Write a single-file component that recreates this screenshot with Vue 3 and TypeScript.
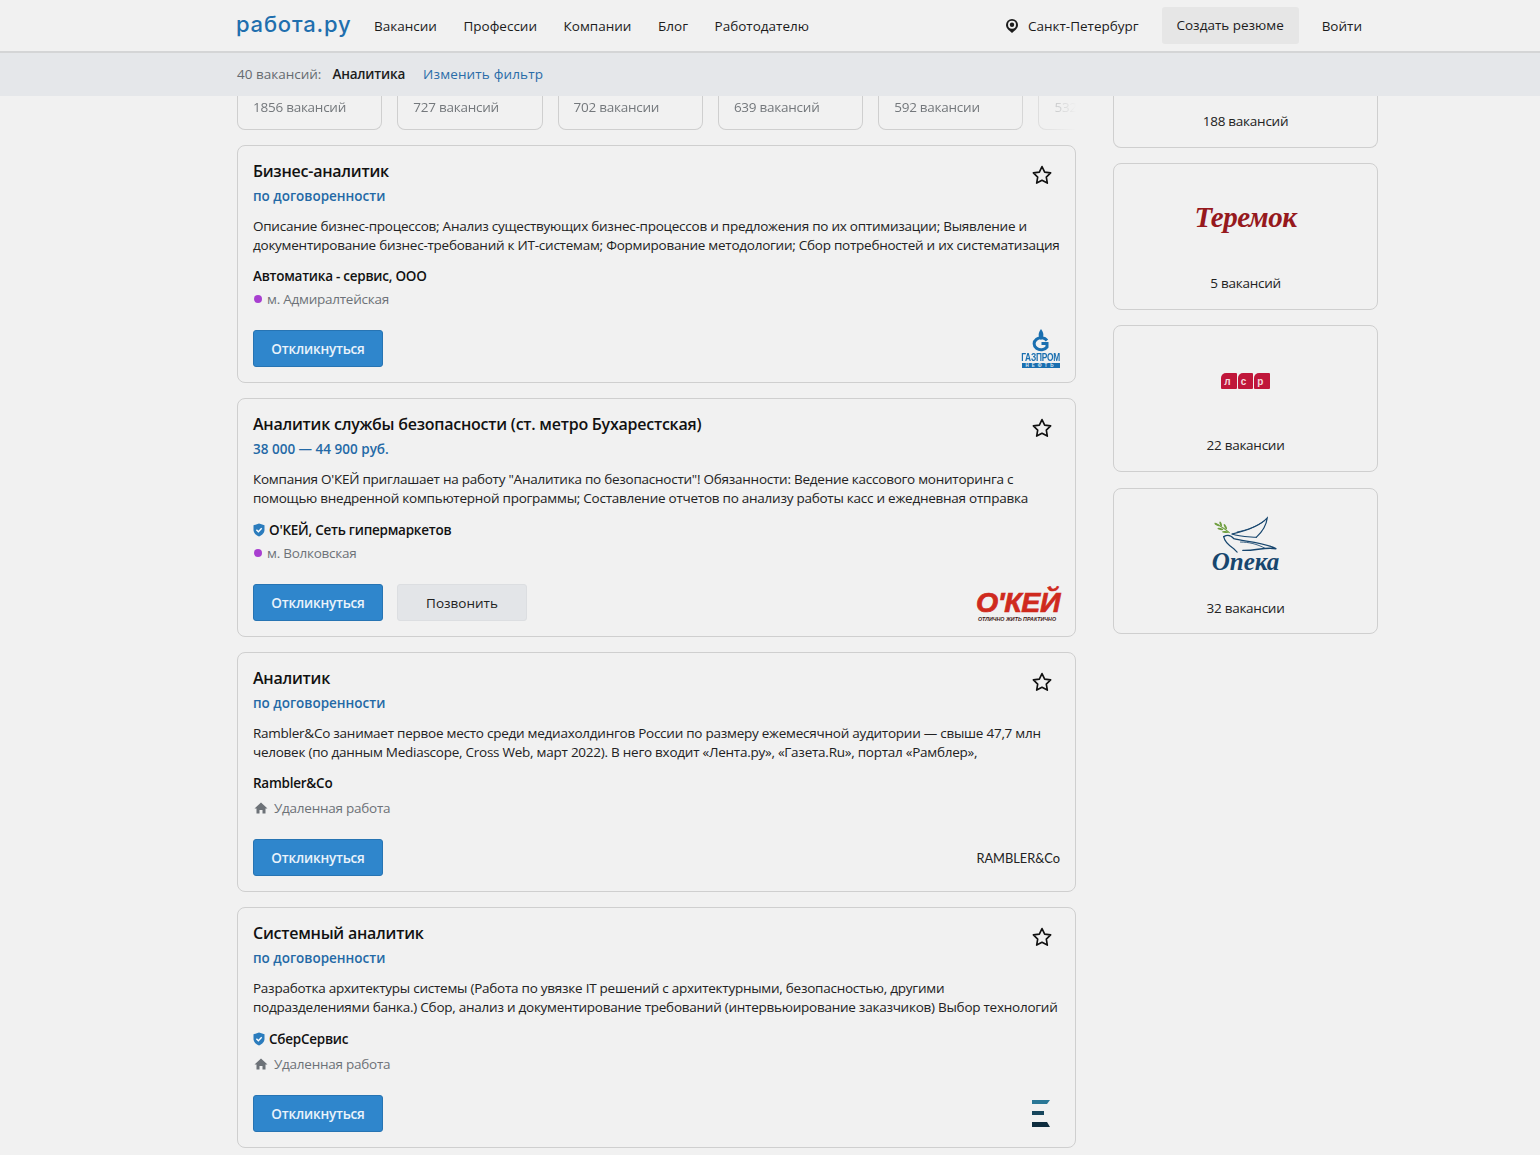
<script setup lang="ts">
interface Vacancy {
  title: string
  salary: string
  text: string[]
  company: string
  verified?: boolean
  metro?: string
  remote?: boolean
  call?: boolean
  logo: 'gazprom' | 'okey' | 'rambler' | 'sber'
}

const nav = ['Вакансии', 'Профессии', 'Компании', 'Блог', 'Работодателю']
const chips = ['1856 вакансий', '727 вакансий', '702 вакансии', '639 вакансий', '592 вакансии', '532 вакансии']

const vacancies: Vacancy[] = [
  {
    title: 'Бизнес-аналитик',
    salary: 'по договоренности',
    text: [
      'Описание бизнес-процессов; Анализ существующих бизнес-процессов и предложения по их оптимизации; Выявление и',
      'документирование бизнес-требований к ИТ-системам; Формирование методологии; Сбор потребностей и их систематизация',
    ],
    company: 'Автоматика - сервис, ООО',
    metro: 'м. Адмиралтейская',
    logo: 'gazprom',
  },
  {
    title: 'Аналитик службы безопасности (ст. метро Бухарестская)',
    salary: '38 000 — 44 900 руб.',
    text: [
      'Компания О\'КЕЙ приглашает на работу "Аналитика по безопасности"! Обязанности: Ведение кассового мониторинга с',
      'помощью внедренной компьютерной программы; Составление отчетов по анализу работы касс и ежедневная отправка',
    ],
    company: "О'КЕЙ, Сеть гипермаркетов",
    verified: true,
    metro: 'м. Волковская',
    call: true,
    logo: 'okey',
  },
  {
    title: 'Аналитик',
    salary: 'по договоренности',
    text: [
      'Rambler&Co занимает первое место среди медиахолдингов России по размеру ежемесячной аудитории — свыше 47,7 млн',
      'человек (по данным Mediascope, Cross Web, март 2022). В него входит «Лента.ру», «Газета.Ru», портал «Рамблер»,',
    ],
    company: 'Rambler&Co',
    remote: true,
    logo: 'rambler',
  },
  {
    title: 'Системный аналитик',
    salary: 'по договоренности',
    text: [
      'Разработка архитектуры системы (Работа по увязке IT решений с архитектурными, безопасностью, другими',
      'подразделениями банка.) Сбор, анализ и документирование требований (интервьюирование заказчиков) Выбор технологий',
    ],
    company: 'СберСервис',
    verified: true,
    remote: true,
    logo: 'sber',
  },
]
</script>

<template>
  <div class="page">
    <header class="topbar">
      <div class="topbar-inner">
        <a class="brand">работа.ру</a>
        <nav class="nav">
          <a v-for="item in nav" :key="item">{{ item }}</a>
        </nav>
        <div class="top-right">
          <span class="city">
            <svg width="14" height="16" viewBox="0 0 14 16">
              <path d="M7 1a6 6 0 0 1 6 6c0 3-3 5.500-6 8-3-2.500-6-5-6-8a6 6 0 0 1 6-6z" fill="#1c1c1c" />
              <circle cx="7" cy="6.800" r="4" fill="#f1f1f1" />
              <circle cx="7" cy="6.800" r="2.200" fill="#1c1c1c" />
            </svg>
            Санкт-Петербург
          </span>
          <a class="resume">Создать резюме</a>
          <a class="login">Войти</a>
        </div>
      </div>
    </header>

    <div class="filterbar">
      <div class="filterbar-inner">
        <span class="count">40 вакансий:</span>
        <span class="query">Аналитика</span>
        <a class="change">Изменить фильтр</a>
      </div>
    </div>

    <main class="layout">
      <section class="results">
        <div class="chips">
          <div v-for="chip in chips" :key="chip" class="chip">{{ chip }}</div>
        </div>

        <article
          v-for="v in vacancies"
          :key="v.title"
          class="card"
          :class="{ 'is-verified': v.verified, 'is-remote': v.remote }"
        >
          <div class="card-head">
            <div>
              <h3 class="title">{{ v.title }}</h3>
              <div class="salary">{{ v.salary }}</div>
            </div>
            <svg class="star" width="22" height="22" viewBox="0 0 24 24">
              <path
                d="M12 2.800l2.900 6 6.500.9-4.700 4.600 1.100 6.500-5.800-3.100-5.800 3.100 1.100-6.500-4.700-4.600 6.500-.9z"
                fill="none"
                stroke="#111"
                stroke-width="1.800"
                stroke-linejoin="round"
              />
            </svg>
          </div>

          <p class="desc">
            <span v-for="line in v.text" :key="line">{{ line }}</span>
          </p>

          <div class="company">
            <svg v-if="v.verified" width="12" height="14" viewBox="0 0 12 14">
              <path d="M6 .5l5.500 1.800v4.500c0 3.200-2.500 5.500-5.500 6.700C3 12.300.5 10 .5 6.800V2.300z" fill="#2b7cbd" />
              <path d="M3.400 6.800l2 2 3.300-3.500" fill="none" stroke="#fff" stroke-width="1.400" />
            </svg>
            {{ v.company }}
          </div>

          <div class="place">
            <i v-if="v.metro" class="metro-dot"></i>
            <svg v-if="v.remote" class="home" width="14" height="12" viewBox="0 0 14 12">
              <path d="M7 .5L.5 6.500h2V11.500h3V8h3v3.500h3V6.500h2z" fill="#6d7278" />
            </svg>
            {{ v.metro || 'Удаленная работа' }}
          </div>

          <div class="card-foot">
            <div class="actions">
              <button class="btn btn-primary">Откликнуться</button>
              <button v-if="v.call" class="btn btn-muted">Позвонить</button>
            </div>

            <div v-if="v.logo === 'gazprom'" class="logo-gazprom">
              <svg width="18" height="23" viewBox="0 0 18 23">
                <path d="M9 0c-2 3-3 5-2 8 .4 1.300 1 2 2 3 1-1 1.600-1.700 2-3 1-3 0-5-2-8z" fill="#1a6fb0" />
                <path
                  d="M15 11.500A7 6 0 1 0 15 18v-3.500H9.500"
                  fill="none"
                  stroke="#1a6fb0"
                  stroke-width="3"
                />
              </svg>
              <span class="gz-name">ГАЗПРОМ</span>
              <span class="gz-sub">НЕФТЬ</span>
            </div>

            <div v-else-if="v.logo === 'okey'" class="logo-okey">
              <span class="okey-name">О'КЕЙ</span>
              <span class="okey-sub">ОТЛИЧНО ЖИТЬ ПРАКТИЧНО</span>
            </div>

            <div v-else-if="v.logo === 'rambler'" class="logo-rambler">RAMBLER&amp;Co</div>

            <svg v-else class="logo-sber" width="20" height="28" viewBox="0 0 20 28">
              <path d="M1 0h18l-3 4H1z" fill="#2a7796" />
              <path d="M1 11h12v4H1z" fill="#17465c" />
              <path d="M1 22h15l3 5H1z" fill="#0e2c3e" />
            </svg>
          </div>
        </article>
      </section>

      <aside class="sidebar">
        <div class="side-card cut"><span class="side-count">188 вакансий</span></div>

        <div class="side-card">
          <div class="side-logo"><span class="logo-teremok">Теремок</span></div>
          <span class="side-count">5 вакансий</span>
        </div>

        <div class="side-card">
          <div class="side-logo">
            <div class="logo-lsr">
              <span>л</span><span>с</span><span>р</span>
            </div>
          </div>
          <span class="side-count">22 вакансии</span>
        </div>

        <div class="side-card">
          <div class="side-logo logo-opeka">
            <svg width="67" height="38" viewBox="130 72 200 112">
              <g fill="none" stroke="#6f9f3f" stroke-width="3">
                <path d="M138 95c15 8 32 18 45 30" />
              </g>
              <g fill="#6f9f3f">
                <ellipse cx="145" cy="100" rx="8" ry="3" transform="rotate(25 145 100)" />
                <ellipse cx="156" cy="98" rx="8" ry="3" transform="rotate(70 156 98)" />
                <ellipse cx="155" cy="113" rx="9" ry="3" transform="rotate(10 155 113)" />
                <ellipse cx="170" cy="106" rx="9" ry="3" transform="rotate(60 170 106)" />
                <ellipse cx="170" cy="122" rx="10" ry="3" transform="rotate(5 170 122)" />
              </g>
              <g fill="none" stroke="#17466e" stroke-linecap="round">
                <path stroke-width="3.500" d="M190 128c35-8 80-20 105-48-3 24-15 42-33 58" />
                <path stroke-width="3" d="M190 128c20 8 48 8 72 10" />
                <path stroke-width="2.500" d="M205 122c30-6 60-16 82-34" />
                <path stroke-width="4" d="M165 136c10-6 22-4 30 6 25 8 90 10 127 30-35-6-60 6-100 5" />
                <path stroke-width="3.500" d="M165 136c2 14 12 24 30 36l10 10" />
                <path stroke-width="2.500" d="M215 152c25 0 50 6 72 18" />
              </g>
            </svg>
            <span class="opeka-name">Опека</span>
          </div>
          <span class="side-count">32 вакансии</span>
        </div>
      </aside>
    </main>
  </div>
</template>

<style>
html,
body {
  margin: 0;
  background: #f1f1f1;
}
</style>

<style scoped>
.page {
  height: 1155px;
  overflow: hidden;
  background: #f1f1f1;
  font-family: 'Open Sans', 'Noto Sans', sans-serif;
  font-size: 13.500px;
  color: #1c1c1c;
}

.topbar {
  height: 51px;
  border-bottom: 2px solid #d4d5d6;
  box-sizing: content-box;
}

.topbar-inner {
  display: flex;
  align-items: center;
  height: 51px;
  padding-left: 236px;
  width: 1126px;
}

.brand {
  width: 138px;
  font-family: 'Inter', 'Open Sans', sans-serif;
  font-size: 22px;
  font-weight: 500;
  letter-spacing: 0.800px;
  color: #1f6fae;
  position: relative;
  top: -2px;
}

.nav {
  display: flex;
  gap: 26.600px;
  font-weight: 500;
}

.top-right {
  margin-left: auto;
  display: flex;
  align-items: center;
  font-weight: 500;
}

.city {
  display: flex;
  align-items: center;
  gap: 9px;
}

.resume {
  margin-left: 23px;
  width: 137px;
  height: 37px;
  line-height: 37px;
  text-align: center;
  background: #e6e6e6;
  border-radius: 3px;
}

.login {
  margin-left: 23px;
}

.filterbar {
  height: 43px;
  background: #e5e7ea;
}

.filterbar-inner {
  display: flex;
  align-items: center;
  height: 41px;
  padding-left: 237px;
}

.count {
  color: #666b70;
}

.query {
  margin-left: 11px;
  font-weight: 600;
  letter-spacing: -0.200px;
}

.change {
  margin-left: 18px;
  font-weight: 500;
  letter-spacing: 0.150px;
  color: #2a6ca8;
}

.layout {
  display: flex;
  gap: 37px;
  padding-left: 237px;
  align-items: flex-start;
}

.results {
  width: 839px;
  display: flex;
  flex-direction: column;
  gap: 15px;
}

.chips {
  display: flex;
  gap: 15px;
  overflow: hidden;
  mask-image: linear-gradient(to right, black 92%, transparent 100%);
}

.chip {
  flex: 0 0 145.300px;
  box-sizing: border-box;
  height: 34px;
  padding: 1px 15px 0;
  border: 1px solid #cfcfcf;
  border-top: 0;
  border-radius: 0 0 8px 8px;
  color: #74787c;
  letter-spacing: -0.250px;
  line-height: 20px;
  white-space: nowrap;
}

.card {
  box-sizing: border-box;
  padding: 14px 15px 15px;
  border: 1px solid #cfcfcf;
  border-radius: 8px;
}

.card-head {
  display: flex;
  justify-content: space-between;
}

.title {
  margin: 0;
  font-size: 16px;
  font-weight: 600;
  letter-spacing: -0.240px;
  line-height: 22px;
  color: #111;
}

.salary {
  margin-top: 4px;
  font-weight: 600;
  line-height: 20px;
  color: #2469a6;
}

.star {
  margin: 4px 7px 0 0;
}

.desc {
  margin: 11px 0 0;
  line-height: 18.500px;
  letter-spacing: -0.250px;
  color: #222;
}

.desc span {
  display: block;
  white-space: nowrap;
}

.company {
  display: flex;
  align-items: center;
  gap: 4px;
  margin-top: 11px;
  height: 22px;
  font-weight: 600;
  letter-spacing: -0.250px;
  color: #111;
}

.is-verified .company {
  height: 23px;
}

.place {
  display: flex;
  align-items: center;
  gap: 5px;
  margin-top: 1px;
  height: 22px;
  letter-spacing: -0.250px;
  color: #6d7278;
}

.is-remote .place {
  height: 24px;
  margin-top: 2px;
  gap: 6px;
}

.metro-dot {
  width: 8px;
  height: 8px;
  margin-left: 1px;
  border-radius: 50%;
  background: #a83fd0;
}

.home {
  margin-left: 1px;
}

.card-foot {
  display: flex;
  align-items: center;
  justify-content: space-between;
  height: 37px;
  margin-top: 20px;
}

.is-remote .card-foot {
  margin-top: 19px;
}

.actions {
  display: flex;
  gap: 14px;
}

.btn {
  width: 130px;
  height: 37px;
  padding: 0;
  border-radius: 3px;
  font: inherit;
  font-weight: 600;
  letter-spacing: -0.200px;
}

.btn-primary {
  background: #2f86cc;
  border: 1px solid #2774b3;
  color: #eaf3fb;
}

.btn-muted {
  background: #e3e5e8;
  border: 1px solid #dcdee1;
  color: #222;
  font-weight: 500;
  letter-spacing: 0;
}

.logo-gazprom {
  display: flex;
  flex-direction: column;
  align-items: center;
  width: 38px;
  line-height: 1;
  color: #1a6fb0;
  font-family: 'Liberation Sans', sans-serif;
}

.gz-name {
  font-size: 11px;
  font-weight: 700;
  letter-spacing: -0.300px;
  transform: scale(0.76, 1.05);
  white-space: nowrap;
  margin-top: 0;
}

.gz-sub {
  width: 100%;
  height: 5px;
  background: #1a6fb0;
  color: #dfeaf3;
  font-size: 4.500px;
  line-height: 5px;
  font-weight: 700;
  letter-spacing: 3px;
  text-align: center;
}

.logo-okey {
  display: flex;
  flex-direction: column;
  align-items: flex-end;
  width: 84px;
  margin-top: 5px;
  font-family: 'Liberation Sans', sans-serif;
  font-style: italic;
  font-weight: 700;
  line-height: 1;
}

.okey-name {
  font-size: 28.500px;
  letter-spacing: -0.400px;
  -webkit-text-stroke: 0.700px #cf2a1e;
  color: #cf2a1e;
}

.okey-sub {
  margin-right: 4px;
  font-size: 5.300px;
  white-space: nowrap;
  color: #3a1512;
}

.logo-rambler {
  font-family: 'Lato', sans-serif;
  font-size: 12.800px;
  color: #222;
}

.logo-sber {
  margin-right: 9px;
}

.sidebar {
  width: 265px;
  display: flex;
  flex-direction: column;
  gap: 15px;
}

.side-card {
  box-sizing: border-box;
  height: 147px;
  display: flex;
  flex-direction: column;
  align-items: center;
  border: 1px solid #cfcfcf;
  border-radius: 8px;
}

.side-card:last-child {
  margin-top: 1px;
  height: 146px;
}

.side-card.cut {
  height: 52px;
  border-top: 0;
  border-radius: 0 0 8px 8px;
  padding-top: 15px;
}

.side-count {
  line-height: 20px;
  letter-spacing: -0.250px;
  color: #222;
}

.side-logo {
  height: 109px;
  flex: none;
  display: flex;
  flex-direction: column;
  align-items: center;
  justify-content: center;
}

.logo-teremok {
  margin-top: -4px;
  font-family: 'Liberation Serif', serif;
  font-style: italic;
  font-weight: 700;
  font-size: 29px;
  line-height: 32px;
  letter-spacing: -0.500px;
  color: #96191d;
}

.logo-lsr {
  display: flex;
  gap: 1px;
}

.logo-lsr span {
  width: 15.500px;
  height: 16px;
  padding: 3px 0 0 3px;
  box-sizing: border-box;
  background: #c0163a;
  border-radius: 5px 1px 1px 1px;
  color: #f4d9de;
  font: 700 10px/12px 'Liberation Sans', sans-serif;
}

.opeka-name {
  margin-top: -2px;
  font-family: 'Liberation Serif', serif;
  font-style: italic;
  font-weight: 700;
  font-size: 25px;
  line-height: 22px;
  color: #17466e;
}
</style>
